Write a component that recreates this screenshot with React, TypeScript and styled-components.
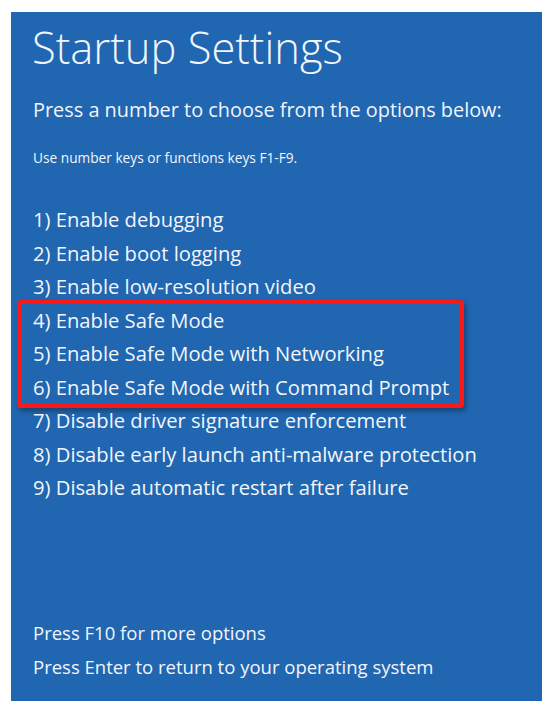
import styled, { createGlobalStyle } from "styled-components";

const Global = createGlobalStyle`
  html, body {
    margin: 0;
    padding: 0;
    background: #ffffff;
  }
  body {
    font-family: "Open Sans", "Noto Sans", "Liberation Sans", sans-serif;
  }
`;

const options = [
  "Enable debugging",
  "Enable boot logging",
  "Enable low-resolution video",
  "Enable Safe Mode",
  "Enable Safe Mode with Networking",
  "Enable Safe Mode with Command Prompt",
  "Disable driver signature enforcement",
  "Disable early launch anti-malware protection",
  "Disable automatic restart after failure",
];

export default function App() {
  return (
    <>
      <Global />
      <Screen>
        <Title>Startup Settings</Title>
        <Lead>Press a number to choose from the options below:</Lead>
        <Hint>Use number keys or functions keys F1-F9.</Hint>
        <OptionList>
          {options.slice(0, 3).map((o, i) => (
            <Option key={o}>{i + 1}) {o}</Option>
          ))}
          <Highlight>
            {options.slice(3, 6).map((o, i) => (
              <Option key={o}>{i + 4}) {o}</Option>
            ))}
          </Highlight>
          {options.slice(6).map((o, i) => (
            <Option key={o}>{i + 7}) {o}</Option>
          ))}
        </OptionList>
        <Footer>
          <FooterLine>Press F10 for more options</FooterLine>
          <FooterLine>Press Enter to return to your operating system</FooterLine>
        </Footer>
      </Screen>
    </>
  );
}

const Screen = styled.div`
  box-sizing: border-box;
  margin: 12px 0 0 11px;
  width: 531px;
  height: 689px;
  background: #2066b1;
  color: #f2f5fa;
  padding: 0 0 0 22px;
  display: flex;
  flex-direction: column;
`;

const Title = styled.h1`
  margin: 6px 0 0 -1px;
  font-size: 43.5px;
  font-weight: 300;
  line-height: 60px;
`;

const Lead = styled.div`
  margin-top: 18px;
  font-size: 19.9px;
  line-height: 28px;
`;

const Hint = styled.div`
  margin-top: 25px;
  font-size: 13.7px;
  line-height: 18px;
`;

const OptionList = styled.div`
  margin-top: 36px;
  display: flex;
  flex-direction: column;
`;

const Option = styled.div`
  font-size: 20.2px;
  line-height: 33.5px;
  white-space: nowrap;
`;

const Highlight = styled.div`
  box-sizing: border-box;
  margin: -4px 0 -4px -16px;
  padding: 0 0 0 12px;
  width: 447px;
  border: 4px solid #fa1818;
  border-radius: 4px;
  box-shadow: 2px 3px 5px rgba(0, 0, 0, 0.35);
`;

const Footer = styled.div`
  margin-top: auto;
  margin-bottom: 18px;
  display: flex;
  flex-direction: column;
`;

const FooterLine = styled.div`
  font-size: 18.5px;
  line-height: 33.5px;
  white-space: nowrap;
`;
